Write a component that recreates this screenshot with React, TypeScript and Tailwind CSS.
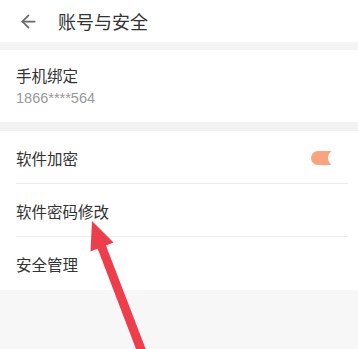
import { ArrowLeft } from "lucide-react";

const font = { fontFamily: '"Noto Sans CJK SC", "Noto Sans", sans-serif' };

function Row({ label, last, children }: { label: string; last?: boolean; children?: React.ReactNode }) {
  return (
    <div className="relative h-[53px] flex items-center justify-between pl-4 pt-[3px]">
      <span className="text-[15.5px] text-[#333]">{label}</span>
      {children}
      {!last && <div className="absolute bottom-0 left-4 right-[10px] h-px bg-[#ededed]" />}
    </div>
  );
}

export default function App() {
  return (
    <div className="relative w-[358px] h-[349px] overflow-hidden bg-[#f7f7f7]" style={font}>
      {/* header */}
      <div className="h-[42px] bg-white flex items-center">
        <ArrowLeft className="ml-[18px] w-[21px] h-[21px] text-[#666]" strokeWidth={2} />
        <span className="ml-[19px] text-[18px] text-[#333] leading-none">账号与安全</span>
      </div>
      <div className="h-2 bg-[#f4f4f4]" />

      {/* phone */}
      <div className="bg-white pt-[14px] pb-[14px] pl-4">
        <div className="text-[15.5px] leading-[22px] text-[#333]">手机绑定</div>
        <div className="text-[14.5px] leading-[20px] text-[#999] mt-[2px]" style={{ fontFamily: '"Liberation Sans", "Noto Sans CJK SC", sans-serif' }}>
          1866****564
        </div>
      </div>
      <div className="h-[9px] bg-[#f2f2f2]" />

      {/* settings */}
      <div className="bg-white">
        <Row label="软件加密">
          <div className="relative mr-3 mb-[3px] w-[35px] h-[14px]">
            <div className="absolute left-0 top-0 w-[28px] h-[14px] rounded-full bg-[#fba27f]" />
            <div className="absolute right-0 top-[-2px] w-[18px] h-[18px] rounded-full bg-white" />
          </div>
        </Row>
        <Row label="软件密码修改" />
        <Row label="安全管理" last />
      </div>

      {/* annotation arrow */}
      <svg className="absolute inset-0 pointer-events-none" width="358" height="349" viewBox="0 0 358 349">
        <line x1="101" y1="245" x2="142" y2="352" stroke="#ee3d4b" strokeWidth="9" />
        <polygon points="92,221 113.5,242.5 90.5,251.5" fill="#ee3d4b" />
      </svg>
    </div>
  );
}
